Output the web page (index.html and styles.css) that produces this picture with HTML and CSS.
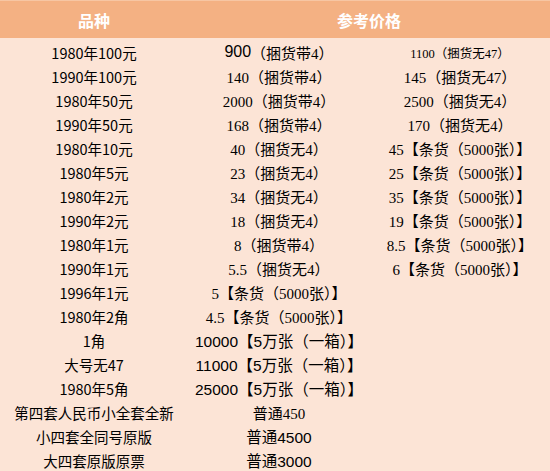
FILE: index.html
```html
<!DOCTYPE html>
<html lang="zh-CN">
<head>
<meta charset="utf-8">
<title>价格表</title>
<link rel="stylesheet" href="styles.css">
</head>
<body>
<div class="sheet">
  <div class="head">
    <div class="hc c1">品种</div>
    <div class="hc c23">参考价格</div>
  </div>
  <div class="rows">
    <div class="n">1980年100元</div><div class="p"><span class="big">900</span>（捆货带4）</div><div class="p small">1100（捆货无47）</div>
    <div class="n">1990年100元</div><div class="p">140（捆货带4）</div><div class="p">145（捆货无47）</div>
    <div class="n">1980年50元</div><div class="p">2000（捆货带4）</div><div class="p">2500（捆货无4）</div>
    <div class="n">1990年50元</div><div class="p">168（捆货带4）</div><div class="p">170（捆货无4）</div>
    <div class="n">1980年10元</div><div class="p">40（捆货无4）</div><div class="p">45【条货（5000张）】</div>
    <div class="n">1980年5元</div><div class="p">23（捆货无4）</div><div class="p">25【条货（5000张）】</div>
    <div class="n">1980年2元</div><div class="p">34（捆货无4）</div><div class="p">35【条货（5000张）】</div>
    <div class="n">1990年2元</div><div class="p">18（捆货无4）</div><div class="p">19【条货（5000张）】</div>
    <div class="n">1980年1元</div><div class="p">8（捆货带4）</div><div class="p">8.5【条货（5000张）】</div>
    <div class="n">1990年1元</div><div class="p">5.5（捆货无4）</div><div class="p">6【条货（5000张）】</div>
    <div class="n">1996年1元</div><div class="p">5【条货（5000张）】</div><div class="p"></div>
    <div class="n">1980年2角</div><div class="p">4.5【条货（5000张）】</div><div class="p"></div>
    <div class="n">1角</div><div class="p sans">10000【5万张（一箱）】</div><div class="p"></div>
    <div class="n">大号无47</div><div class="p sans">11000【5万张（一箱）】</div><div class="p"></div>
    <div class="n">1980年5角</div><div class="p sans">25000【5万张（一箱）】</div><div class="p"></div>
    <div class="n">第四套人民币小全套全新</div><div class="p">普通450</div><div class="p"></div>
    <div class="n">小四套全同号原版</div><div class="p sans">普通4500</div><div class="p"></div>
    <div class="n">大四套原版原票</div><div class="p sans">普通3000</div><div class="p"></div>
  </div>
</div>
</body>
</html>
```

FILE: styles.css
```css
html, body {
  margin: 0;
  padding: 0;
  background: #fce4d6;
}
.sheet {
  width: 550px;
  height: 471px;
  overflow: hidden;
  background: #fce4d6;
  color: #000;
}
.head {
  display: grid;
  grid-template-columns: 188px 1fr;
  height: 37px;
  border-top: 1px solid #f7c6a3;
  background: #f4b183;
}
.hc {
  display: flex;
  align-items: center;
  justify-content: center;
  color: #fff;
  font-family: "Noto Sans CJK SC", sans-serif;
  font-weight: 700;
  font-size: 16px;
  padding-top: 1px;
}
.rows {
  display: grid;
  grid-template-columns: 188px 182px 180px;
  grid-auto-rows: 24px;
  padding-top: 2px;
}
.n, .p {
  display: flex;
  align-items: center;
  justify-content: center;
  white-space: nowrap;
}
.n {
  font-family: "Noto Sans CJK SC", sans-serif;
  font-size: 14.5px;
}
.p {
  font-family: "Liberation Serif", "Noto Sans CJK SC", serif;
  font-size: 15px;
}
.p.small {
  font-size: 12.5px;
}
.p.sans {
  font-family: "Liberation Sans", "Noto Sans CJK SC", sans-serif;
  font-size: 15.5px;
}
.big {
  font-family: "Liberation Sans", sans-serif;
  font-size: 16px;
}
```
